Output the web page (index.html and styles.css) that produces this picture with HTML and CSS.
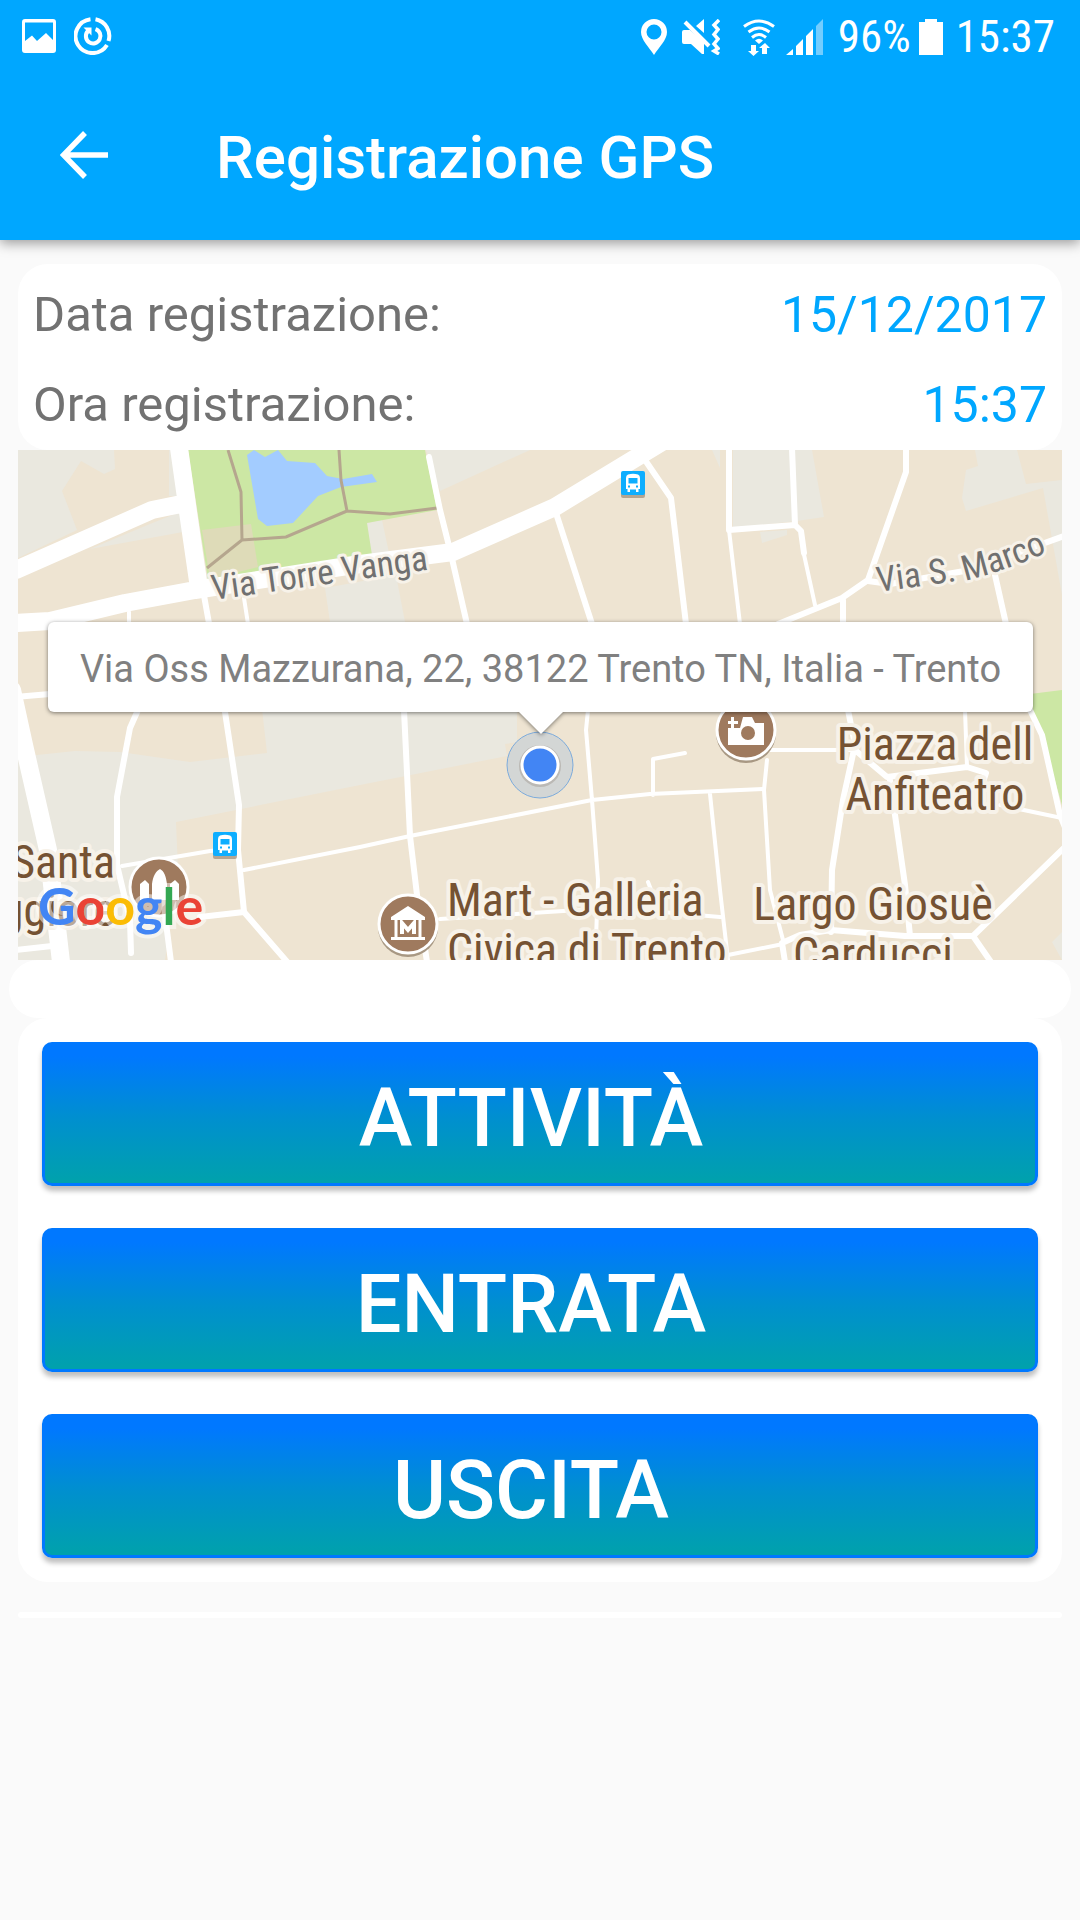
FILE: index.html
```html
<!DOCTYPE html>
<html lang="it">
<head>
<meta charset="utf-8">
<meta name="viewport" content="width=device-width, initial-scale=1">
<title>Registrazione GPS</title>
<link rel="stylesheet" href="styles.css">
</head>
<body>
<header class="app-header">
  <div class="status-bar">
    <div class="status-group status-left">
      <svg width="34" height="34" viewBox="0 0 34 34" aria-hidden="true"><path fill="#fff" fill-rule="evenodd" d="M3 0H31Q34 0 34 3V31Q34 34 31 34H3Q0 34 0 31V3Q0 0 3 0ZM3 3.500V22L10 16.500L15 22L24 14L31 21V3.500Z"/></svg>
      <svg width="38" height="38" viewBox="0 0 38 38" aria-hidden="true"><g fill="none" stroke="#fff" stroke-width="4"><path d="M16.500 2.200A17 17 0 1 0 33 28"/><path d="M21.500 2.200A17 17 0 0 1 34.500 24"/><path d="M14 14A7.300 7.300 0 1 0 21.500 12.200"/></g><path fill="#fff" d="M9.500 10.500H17.500V18.500Z"/></svg>
    </div>
    <div class="status-group status-right">
      <svg class="ic-pin" width="26" height="36" viewBox="0 0 26 36" aria-hidden="true"><path fill="#fff" fill-rule="evenodd" d="M13 0A13 13 0 0 1 26 13C26 21 18 28 13 36C8 28 0 21 0 13A13 13 0 0 1 13 0ZM13 5.500A7.500 7.500 0 1 0 13 20.500A7.500 7.500 0 1 0 13 5.500Z"/></svg>
      <svg class="ic-mute" width="38" height="36" viewBox="0 0 38 36" aria-hidden="true"><path fill="#fff" d="M2 11H8L22 23V35H20L9 25H2Q0 25 0 23V13Q0 11 2 11ZM22 0V14L14 7Z"/><path d="M3 3L27 27" stroke="#fff" stroke-width="4"/><path d="M37 1L32 6L36 10.500L32 15.500L36 20L32 25L36 29.500L32 32L37 35" fill="none" stroke="#fff" stroke-width="3.500"/></svg>
      <svg class="ic-wifi" width="32" height="37" viewBox="0 0 32 37" aria-hidden="true"><g fill="none" stroke="#fff" stroke-width="3"><path d="M1 7.500Q16-3.500 31 7.500"/><path d="M5.500 13Q16 5 26.500 13"/><path d="M9 18.500Q16 12.500 23 18.500"/></g><path fill="#fff" d="M12 21.500Q16 18 20 21.500L16 25ZM8 26H13V32H16L10.500 37L5 32H8ZM19 35V29H16L22 24L27 29H24V35Z"/></svg>
      <svg class="ic-signal" width="37" height="36" viewBox="0 0 37 36" aria-hidden="true"><path fill="#fff" d="M0 36L7 30V36ZM10 36V27L17 20V36ZM20 36V17L27 10V36Z"/><path fill="#73cdff" d="M30 36V7L37 0V36Z"/></svg>
      <span class="battery-level">96%</span>
      <svg class="ic-battery" width="24" height="36" viewBox="0 0 24 36" aria-hidden="true"><path fill="#fff" d="M6 0H18V3H24V36H0V3H6Z"/></svg>
      <time class="clock">15:37</time>
    </div>
  </div>
  <div class="toolbar">
    <button class="back" type="button" aria-label="Indietro">
      <svg width="48" height="48" viewBox="0 0 48 48" aria-hidden="true"><path d="M48 24H5M25 2L3.500 24L25 46" fill="none" stroke="#fff" stroke-width="5.500"/></svg>
    </button>
    <h1 class="title">Registrazione GPS</h1>
  </div>
</header>

<main class="content">
  <dl class="card details">
    <div class="detail"><dt>Data registrazione:</dt><dd>15/12/2017</dd></div>
    <div class="detail"><dt>Ora registrazione:</dt><dd>15:37</dd></div>
  </dl>

  <section class="map" aria-label="Mappa">
    <svg class="map-canvas" viewBox="18 450 1044 510">
      <defs>
        <path id="marco" d="M878 592L972 579Q1015 568 1070 542"/>
        <g id="bus">
          <rect y="2" width="24" height="25" rx="2" fill="#8e7c67" opacity=".6"/>
          <rect width="24" height="24" rx="2" fill="#0eaeff"/>
          <path fill="#fff" fill-rule="evenodd" d="M7 3.500Q12 2 17 3.500Q19 4 19 7V18H17.500V21H15V18.500H9V21H6.500V18H5V7Q5 4 7 3.500ZM7.500 7V12.500H16.500V7ZM7 14.500V16.500H9V14.500ZM15 14.500V16.500H17V14.500Z"/>
        </g>
      </defs>
      <rect class="land" x="18" y="450" width="1044" height="510"/>
      <g class="block">
        <path d="M18 450H114L115 469L104 474L81 461L62 491L77 530L18 558Z"/>
        <path d="M169 450V496H182V450ZM90 549L150 524L180 512L183 532Z"/>
        <path d="M426 450H530L440 491ZM367 523L382 520L389 553L370 556ZM325 588L396 575L405 622H330Z"/>
        <path d="M712 450H720V468ZM733 450H812L824 517L797 521L733 528ZM760 532L787 530V535L762 543Z"/>
        <path d="M975 450H1017L1026 484L1062 480V595L1043 488L966 511L962 498L966 470L978 466ZM1052 942L1062 932V960Z"/>
        <path d="M18 757L75 751L120 752L190 762L267 753L261 700H517V742L505 744L507 756L360 785L176 822L178 870L165 960H18Z"/>
      </g>
      <g class="park">
        <path d="M188 450H425L437 510L367 523L372 555L208 580Z"/>
        <path d="M1030 694L1062 690V805L1042 735L1033 712Z"/>
      </g>
      <path class="scrub" d="M202 530L251 524L258 567L210 579Z"/>
      <path class="water" d="M247 455L254 450L265 457L278 450L287 461L315 463L327 476L343 479L372 474L377 482L341 487L318 496L293 523L267 526L258 519Z"/>
      <g class="trail">
        <path d="M228 450L241 492L242 540L207 568M242 540L286 537L347 511L341 480L339 450M347 511L390 514L437 508"/>
      </g>
      <g class="road major">
        <path d="M179 448L188 512L199 588M16 570L152 510L186 503M16 623L50 621L125 603L195 590L360 564L453 552L555 507L662 442"/>
        <path d="M12 690L24 745L48 850L61 962"/>
      </g>
      <g class="road minor">
        <path d="M203 590L225 712L239 805L238 850L244 912L289 964M429 457L440 510L450 550L467 624M555 510L592 624M645 460L671 498L686 624"/>
        <path d="M729 448V530L795 525L792 448M795 525L801 531L804 553M906 448V472L868 580L842 598L778 624M843 600V624M868 581L890 584L970 570L1064 536M995 575L1006 624"/>
        <path d="M16 697L50 694M138 710L130 728L117 797V865L130 920L131 953M200 917L244 912M165 915L171 962M16 950L52 946"/>
        <path d="M404 710L410 836L417 895L427 962M848 710L855 745L843 800L832 870L831 932M855 750L887 777L967 767L986 773L983 782M890 780L905 885L910 936M785 962L782 943L800 935L831 930L905 936H973L991 962M973 936L1064 848M1030 710L1042 735L1060 815L1066 830"/>
      </g>
      <g class="road lane">
        <path d="M729 530L740 624M803 550L815 605M129 612V624M244 598L248 624M122 866L210 851L238 848M244 870L360 847L410 836L592 800L650 794L763 789M588 710L586 730L592 800L598 880L596 940M440 919L595 909L650 911L720 917M653 795V759L685 753M710 794L720 890L728 960M648 882L655 900"/>
        <path d="M770 750H855M767 760L764 790L770 890L783 940M965 710L967 767M728 955L783 944M1000 805L1062 818"/>
      </g>
      <use href="#bus" x="621" y="471"/>
      <use href="#bus" x="213" y="832"/>

      <g class="poi">
        <circle class="poi-shadow" cx="746" cy="733" r="30"/>
        <circle cx="746" cy="730" r="29"/>
        <path fill="#fff" d="M728 728H740L743 717H752L755 723H764V745H728ZM728 721H731V717H734V721H738V724H734V728H731V724H728Z"/>
        <circle class="poi-hole" cx="748" cy="733" r="7"/>
      </g>
      <g class="poi">
        <circle cx="159" cy="887" r="29"/>
        <path fill="#fff" d="M140 900V884L145 880L149 884V900ZM152 900V884C153 876 156 871 160 869C164 871 166 876 167 884V900ZM170 900V884L175 880L179 884V900Z"/>
      </g>
      <g class="poi">
        <circle class="poi-shadow" cx="408" cy="927" r="30"/>
        <circle cx="408" cy="924" r="29"/>
        <path fill="#fff" d="M391 917L408 906L425 917V920H391ZM391 937H425V940H391Z"/>
        <path fill="none" stroke="#fff" stroke-width="3" d="M396 919V938M420 919V938"/>
        <path fill="none" stroke="#fff" stroke-width="4" d="M402 934V923L408 930L414 923V934"/>
      </g>

      <g class="street">
        <text transform="translate(213 600) rotate(-8)">Via Torre Vanga</text>
        <text><textPath href="#marco">Via S. Marco</textPath></text>
      </g>
      <g class="place">
        <text x="935" y="760">Piazza dell</text>
        <text x="935" y="810">Anfiteatro</text>
        <text x="873" y="920">Largo Giosuè</text>
        <text x="873" y="970">Carducci</text>
        <text class="place-start" x="447" y="916">Mart - Galleria</text>
        <text class="place-start" x="447" y="966">Civica di Trento</text>
        <text class="place-end" x="115" y="878">Santa</text>
        <text class="place-end" x="115" y="926">Maggiore</text>
      </g>

      <circle cx="540" cy="765" r="33" fill="#b8c8d8" fill-opacity=".5" stroke="#7cabdc" stroke-width="1"/>
      <circle cx="540" cy="766" r="21" fill="#998f84" opacity=".4"/>
      <circle cx="540" cy="765" r="18" fill="#4285f4" stroke="#fff" stroke-width="3"/>

      <text class="brand" x="38" y="925"><tspan fill="#4285f4">G</tspan><tspan fill="#ea4335">o</tspan><tspan fill="#fbbc05">o</tspan><tspan fill="#4285f4">g</tspan><tspan fill="#34a853">l</tspan><tspan fill="#ea4335">e</tspan></text>
    </svg>
    <div class="info-window">Via Oss Mazzurana, 22, 38122 Trento TN, Italia - Trento</div>
  </section>

  <div class="spacer-pill"></div>

  <section class="card actions">
    <button class="action" type="button">ATTIVITÀ</button>
    <button class="action" type="button">ENTRATA</button>
    <button class="action" type="button">USCITA</button>
  </section>

  <div class="rule"></div>
</main>
</body>
</html>
```
FILE: styles.css
```css
* { box-sizing: border-box; }

body {
  margin: 0;
  min-height: 100vh;
  background: #fafafa;
  color: #727272;
  font-family: Roboto, "Liberation Sans", sans-serif;
}

button { border: 0; padding: 0; font: inherit; color: inherit; background: none; }

.app-header {
  position: relative;
  background: #00a7ff;
  color: #fff;
  box-shadow: 0 3px 12px rgba(0, 0, 0, 0.4);
}

.status-bar {
  display: flex;
  justify-content: space-between;
  align-items: center;
  height: 72px;
  padding: 0 25px 0 22px;
}

.status-group { display: flex; align-items: center; }
.status-left { gap: 18px; }
.status-right {
  padding-top: 2px;
  font-family: "Roboto Condensed", Roboto, sans-serif;
  font-size: 45px;
  line-height: 70px;
}
.ic-mute { margin-left: 15px; }
.ic-wifi { margin-left: 23px; }
.ic-signal { margin-left: 11px; }
.battery-level { margin-left: 15px; }
.ic-battery { margin-left: 8px; }
.clock { margin-left: 13px; }

.toolbar { display: flex; align-items: center; height: 168px; padding: 4px 60px 0; }
.back { display: flex; align-items: center; width: 156px; height: 96px; padding-bottom: 6px; }
.title { margin: 0; font-size: 60px; font-weight: 500; line-height: 72px; }

.content { padding: 24px 18px 0; }
.card { margin: 0; background: #fff; border-radius: 30px; }

.details { padding: 6px 15px 0; }
.detail { display: flex; justify-content: space-between; font-size: 49px; line-height: 90px; }
.detail dt, .detail dd { margin: 0; }
.detail dd { color: #00a7ff; font-size: 50px; }

.map { position: relative; overflow: hidden; }
.map-canvas { display: block; width: 100%; height: auto; }
.land { fill: #eee4d2; }
.block { fill: #eae8df; }
.park { fill: #cce7a4; }
.scrub { fill: #dedbb8; }
.water { fill: #a3ccff; }
.trail { fill: none; stroke: #b5a68e; stroke-width: 3; }
.road { fill: none; stroke: #fff; stroke-linejoin: round; stroke-linecap: round; }
.major { stroke-width: 18; }
.minor { stroke-width: 6; }
.lane { stroke-width: 4; }
.poi circle { fill: #9f7a5e; stroke: #fff; stroke-width: 3; }
.poi .poi-hole { stroke: none; }
.poi .poi-shadow { fill: #a89883; stroke: none; }

.street text, .place text {
  font-family: "Roboto Condensed", Roboto, sans-serif;
  stroke: #f7f2e9;
  stroke-width: 8;
  stroke-linejoin: round;
  paint-order: stroke;
}
.street text { font-size: 35px; fill: #707070; stroke-width: 6; }
.place text { font-size: 46px; fill: #755233; text-anchor: middle; }
.place .place-start { text-anchor: start; }
.place .place-end { text-anchor: end; }
.brand {
  font-family: Lato, sans-serif;
  font-size: 52px;
  font-weight: 700;
  stroke: #fff;
  stroke-opacity: 0.5;
  stroke-width: 8;
  paint-order: stroke;
}

.info-window {
  position: absolute;
  top: 172px;
  left: 30px;
  right: 29px;
  padding-top: 4px;
  border-radius: 6px;
  background: #fff;
  color: #808080;
  font-size: 38px;
  line-height: 86px;
  text-align: center;
  white-space: nowrap;
  filter: drop-shadow(0 1px 2px rgba(0, 0, 0, 0.5));
}
.info-window::after {
  content: "";
  position: absolute;
  top: 100%;
  left: 50%;
  margin-left: -22px;
  border: 22px solid transparent;
  border-top-color: #fff;
  border-bottom: 0;
}

.spacer-pill { height: 58px; margin: 0 -9px; border-radius: 29px; background: #fff; }

.actions { display: flex; flex-direction: column; gap: 42px; padding: 24px 24px; }
.action {
  height: 144px;
  padding: 10px 18px 0 0;
  border: 3px solid #0078ff;
  border-radius: 10px;
  background: linear-gradient(#0078ff 8%, #008fd0 52%, #00a1ad 98%);
  color: #fff;
  font-size: 81px;
  font-weight: 500;
  line-height: 96px;
  box-shadow: 0 5px 5px rgba(0, 0, 0, 0.25);
}

.rule { height: 6px; margin-top: 30px; border-radius: 3px; background: #fff; }
```
